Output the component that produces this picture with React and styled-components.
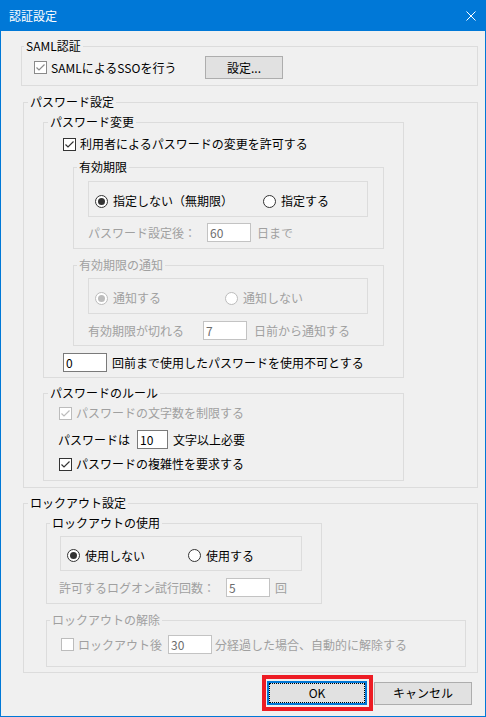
import React from 'react';
import styled, { createGlobalStyle, css } from 'styled-components';

const FONT = `"Noto Sans CJK JP", "Noto Sans", "DejaVu Sans", sans-serif`;

const Global = createGlobalStyle`
  html, body { margin: 0; padding: 0; background: #f0f0f0; }
  body { font-family: ${FONT}; font-size: 12px; color: #000; }
  *, *::before, *::after { box-sizing: border-box; }
`;

const Window = styled.div`
  width: 486px;
  height: 717px;
  border: 1px solid #0078d7;
  background: #f0f0f0;
  display: flex;
  flex-direction: column;
  overflow: hidden;
  font-family: ${FONT};
  font-size: 12px;
  line-height: 16px;
`;

const TitleBar = styled.div`
  height: 30px;
  flex: none;
  background: #0078d7;
  color: #fff;
  display: flex;
  align-items: center;
  justify-content: space-between;
  padding: 0 9px 0 8px;
`;

const TitleText = styled.span`
  font-size: 12px;
  line-height: 16px;
`;

const CloseIcon = styled.svg`
  display: block;
  width: 10px;
  height: 10px;
`;

const Body = styled.div`
  flex: 1;
  display: flex;
  flex-direction: column;
  align-items: stretch;
  padding: 0 7px 0 0;
`;

const Group = styled.div`
  border: 1px solid #dcdcdc;
  display: flex;
  flex-direction: column;
  align-items: flex-start;
  margin: ${(p) => p.$mt || 0}px 0 0 ${(p) => p.$ml || 0}px;
  padding-bottom: ${(p) => p.$pb || 0}px;
  ${(p) =>
    p.$w
      ? css`
          width: ${p.$w}px;
          align-self: flex-start;
        `
      : css`
          align-self: stretch;
        `}
`;

const GroupLabel = styled.div`
  margin: -9px 0 0 ${(p) => (p.$x || 6) - 2}px;
  padding: 0 2px;
  height: 16px;
  line-height: 16px;
  background: #f0f0f0;
  white-space: nowrap;
  color: ${(p) => (p.$disabled ? '#a0a0a0' : '#000')};
`;

const Frame = styled.div`
  border: 1px solid #dcdcdc;
  width: ${(p) => p.$w}px;
  height: ${(p) => p.$h}px;
  margin: ${(p) => p.$mt || 0}px 0 0 ${(p) => p.$ml || 0}px;
  padding: 4px 0 0 6px;
  display: flex;
  align-items: center;
`;

const Row = styled.div`
  display: flex;
  align-items: center;
  height: ${(p) => p.$h || 16}px;
  margin: ${(p) => p.$mt || 0}px 0 0 ${(p) => p.$ml || 0}px;
`;

const Text = styled.span`
  flex: none;
  white-space: nowrap;
  line-height: 16px;
  color: ${(p) => (p.$disabled ? '#a0a0a0' : '#000')};
  margin-left: ${(p) => p.$ml || 0}px;
  ${(p) => p.$w && css`width: ${p.$w}px;`}
`;

const CheckItem = styled.label`
  flex: none;
  display: inline-flex;
  align-items: center;
  gap: 4px;
  white-space: nowrap;
  line-height: 16px;
  color: ${(p) => (p.$disabled ? '#a0a0a0' : '#000')};
  ${(p) => p.$w && css`width: ${p.$w}px;`}
`;

const Box = styled.span`
  flex: none;
  width: 13px;
  height: 13px;
  border: 1px solid ${(p) => p.$tone};
  background: #fff;
  display: flex;
  align-items: center;
  justify-content: center;
  svg { display: block; }
`;

const RadioItem = styled.label`
  flex: none;
  display: inline-flex;
  align-items: center;
  gap: 5px;
  white-space: nowrap;
  line-height: 16px;
  color: ${(p) => (p.$disabled ? '#a0a0a0' : '#000')};
  ${(p) => p.$w && css`width: ${p.$w}px;`}
`;

const Circle = styled.span`
  flex: none;
  width: 13px;
  height: 13px;
  border-radius: 50%;
  border: 1px solid ${(p) => (p.$disabled ? '#bcbcbc' : '#333')};
  background: #fff;
  display: flex;
  align-items: center;
  justify-content: center;
  &::after {
    content: '';
    display: ${(p) => (p.$checked ? 'block' : 'none')};
    width: 7px;
    height: 7px;
    border-radius: 50%;
    background: ${(p) => (p.$disabled ? '#bcbcbc' : '#333')};
  }
`;

const TextBox = styled.input`
  flex: none;
  width: ${(p) => p.$w}px;
  height: 19px;
  margin: 0;
  padding: 0 2px;
  border: 1px solid ${(p) => (p.$disabled ? '#c3c3c3' : '#7a7a7a')};
  border-radius: 0;
  background: #fff;
  font-family: ${FONT};
  font-size: 12px;
  line-height: 17px;
  color: ${(p) => (p.$disabled ? '#6d6d6d' : '#000')};
  outline: none;
`;

const Button = styled.button`
  flex: none;
  position: relative;
  width: ${(p) => p.$w}px;
  height: ${(p) => p.$h}px;
  margin: 0 0 0 ${(p) => p.$ml || 0}px;
  padding: 0;
  background: #e1e1e1;
  border: 1px solid #adadad;
  border-radius: 0;
  font-family: ${FONT};
  font-size: 12px;
  line-height: 16px;
  color: #000;
  ${(p) =>
    p.$default &&
    css`
      border-color: #0078d7;
      box-shadow: inset 0 0 0 1px #0078d7;
      &::after {
        content: '';
        position: absolute;
        inset: 1px;
        border: 1px dotted #000;
      }
    `}
`;

const ButtonRow = styled.div`
  display: flex;
  justify-content: flex-end;
  align-items: center;
  margin: 2px 6px 0 0;
`;

const Highlight = styled.div`
  display: flex;
  border: 4px solid #ed1c24;
  padding: 2px 2px 2px 1px;
`;

function CheckBox({ checked, disabled, muted }) {
  const tone = disabled ? '#bcbcbc' : muted ? '#8a8a8a' : '#333';
  return (
    <Box $tone={tone}>
      {checked && (
        <svg width="11" height="11" viewBox="0 0 11 11">
          <polyline points="1.5,5.5 4,8 9.5,2.5" fill="none" stroke={tone} strokeWidth="1.2" />
        </svg>
      )}
    </Box>
  );
}

function Check({ children, checked, disabled, muted, w }) {
  return (
    <CheckItem $disabled={disabled} $w={w}>
      <CheckBox checked={checked} disabled={disabled} muted={muted} />
      <span>{children}</span>
    </CheckItem>
  );
}

function Radio({ children, checked, disabled, w }) {
  return (
    <RadioItem $disabled={disabled} $w={w}>
      <Circle $checked={checked} $disabled={disabled} />
      <span>{children}</span>
    </RadioItem>
  );
}

function Field({ w, value, disabled }) {
  return <TextBox $w={w} $disabled={disabled} value={value} readOnly />;
}

export default function App() {
  return (
    <>
      <Global />
      <Window>
        <TitleBar>
          <TitleText>認証設定</TitleText>
          <CloseIcon viewBox="0 0 10 10">
            <path d="M0.5 0.5 L9.5 9.5 M9.5 0.5 L0.5 9.5" stroke="#fff" strokeWidth="1" fill="none" />
          </CloseIcon>
        </TitleBar>
        <Body>
          <Group $mt={15} $ml={20} $pb={6}>
            <GroupLabel $x={4}>SAML認証</GroupLabel>
            <Row $mt={2} $ml={12} $h={23}>
              <Check checked muted w={171}>SAMLによるSSOを行う</Check>
              <Button $w={78} $h={23}>設定...</Button>
            </Row>
          </Group>

          <Group $mt={16} $ml={22} $pb={6}>
            <GroupLabel $x={6}>パスワード設定</GroupLabel>
            <Group $mt={12} $ml={19} $w={361} $pb={5}>
              <GroupLabel $x={6}>パスワード変更</GroupLabel>
              <Row $mt={6} $ml={19}>
                <Check checked>利用者によるパスワードの変更を許可する</Check>
              </Row>
              <Group $mt={15} $ml={29} $w={311} $pb={6}>
                <GroupLabel $x={5}>有効期限</GroupLabel>
                <Frame $mt={6} $ml={14} $w={280} $h={36}>
                  <Radio checked w={168}>指定しない（無期限）</Radio>
                  <Radio>指定する</Radio>
                </Frame>
                <Row $mt={6} $ml={14} $h={19}>
                  <Text $disabled $w={119}>パスワード設定後：</Text>
                  <Field w={44} value="60" disabled />
                  <Text $disabled $ml={6}>日まで</Text>
                </Row>
              </Group>
              <Group $mt={16} $ml={29} $w={311} $pb={5}>
                <GroupLabel $x={5} $disabled>有効期限の通知</GroupLabel>
                <Frame $mt={5} $ml={14} $w={280} $h={36}>
                  <Radio checked disabled w={130}>通知する</Radio>
                  <Radio disabled>通知しない</Radio>
                </Frame>
                <Row $mt={7} $ml={14} $h={19}>
                  <Text $disabled $w={115}>有効期限が切れる</Text>
                  <Field w={44} value="7" disabled />
                  <Text $disabled $ml={7}>日前から通知する</Text>
                </Row>
              </Group>
              <Row $mt={7} $ml={19} $h={19}>
                <Field w={44} value="0" />
                <Text $ml={5}>回前まで使用したパスワードを使用不可とする</Text>
              </Row>
            </Group>

            <Group $mt={15} $ml={19} $w={361} $pb={8}>
              <GroupLabel $x={6}>パスワードのルール</GroupLabel>
              <Row $mt={4} $ml={15}>
                <Check checked disabled>パスワードの文字数を制限する</Check>
              </Row>
              <Row $mt={9} $ml={14} $h={19}>
                <Text $w={79}>パスワードは</Text>
                <Field w={31} value="10" />
                <Text $ml={5}>文字以上必要</Text>
              </Row>
              <Row $mt={7} $ml={15}>
                <Check checked>パスワードの複雑性を要求する</Check>
              </Row>
            </Group>
          </Group>

          <Group $mt={15} $ml={22} $pb={5}>
            <GroupLabel $x={6}>ロックアウト設定</GroupLabel>
            <Group $mt={12} $ml={22} $w={276} $pb={6}>
              <GroupLabel $x={5}>ロックアウトの使用</GroupLabel>
              <Frame $mt={5} $ml={13} $w={242} $h={35}>
                <Radio checked w={121}>使用しない</Radio>
                <Radio>使用する</Radio>
              </Frame>
              <Row $mt={7} $ml={12} $h={19}>
                <Text $disabled $w={167}>許可するログオン試行回数：</Text>
                <Field w={44} value="5" disabled />
                <Text $disabled $ml={5}>回</Text>
              </Row>
            </Group>
            <Group $mt={16} $ml={22} $w={420} $pb={12}>
              <GroupLabel $x={5} $disabled>ロックアウトの解除</GroupLabel>
              <Row $mt={7} $ml={14} $h={19}>
                <Check disabled w={107}>ロックアウト後</Check>
                <Field w={44} value="30" disabled />
                <Text $disabled $ml={3}>分経過した場合、自動的に解除する</Text>
              </Row>
            </Group>
          </Group>

          <ButtonRow>
            <Highlight>
              <Button $default $w={100} $h={24}>OK</Button>
            </Highlight>
            <Button $w={98} $h={23} $ml={1}>キャンセル</Button>
          </ButtonRow>
        </Body>
      </Window>
    </>
  );
}
